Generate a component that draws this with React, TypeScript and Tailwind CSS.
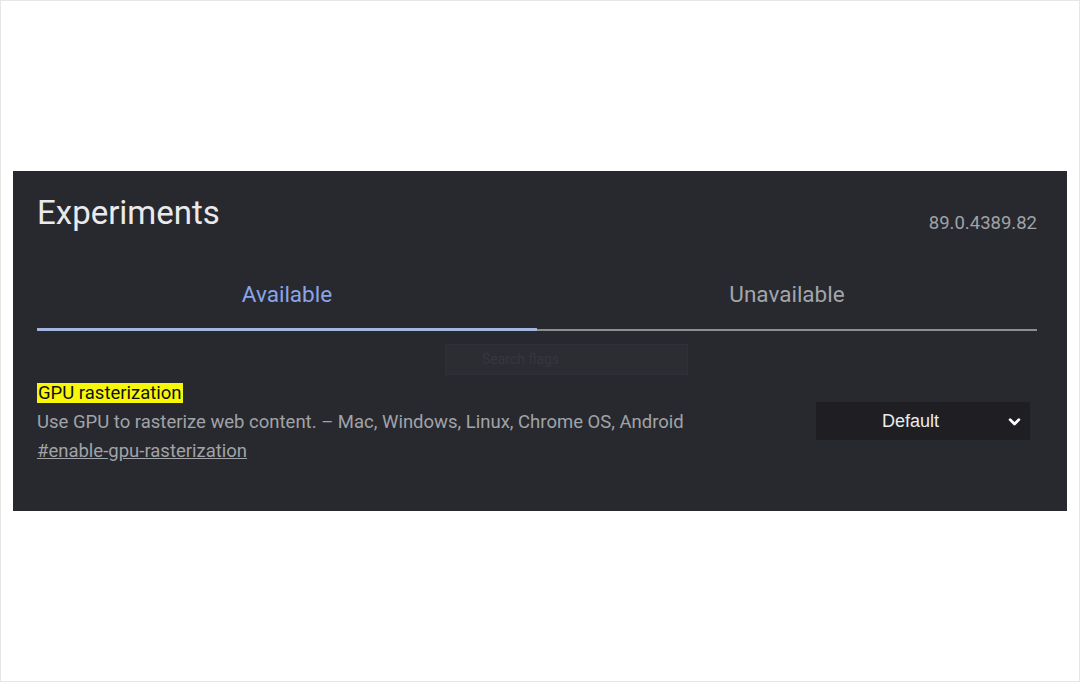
import React from 'react'

const Chevron = () => (
	<svg width="15" height="15" viewBox="0 0 24 24" fill="none" stroke="currentColor" strokeWidth="4.5" strokeLinecap="round" strokeLinejoin="round">
		<polyline points="5 9 12 16 19 9" />
	</svg>
)

const App: React.FC = () => {
	return (
		<div
			className="w-[1080px] h-[682px] bg-white border border-[#e6e6e6] pt-[170px] pl-[12px]"
			style={{ fontFamily: 'Roboto, "Liberation Sans", sans-serif' }}
		>
			<div className="w-[1054px] h-[340px] bg-[#28292e] pl-[24px] pr-[30px]">
				<div className="flex items-start justify-between pt-[22px]">
					<h1 className="text-[33px] leading-[40px] text-[#e8eaed]">Experiments</h1>
					<span className="mt-[17px] text-[18.5px] text-[#a0a3a8]">89.0.4389.82</span>
				</div>
				<div className="flex mt-[43px]">
					<div className="flex-1 flex flex-col items-center">
						<span className="text-[22.5px] leading-[26px] text-[#89a5e8] h-[47px]">Available</span>
						<div className="w-full h-[3px] bg-[#a3b6df]" />
					</div>
					<div className="flex-1 flex flex-col items-center">
						<span className="text-[22.5px] leading-[26px] text-[#a3a5aa] h-[48px]">Unavailable</span>
						<div className="w-full h-[2px] bg-[#8d8e92]" />
					</div>
				</div>
				<div className="flex mt-[13px] pl-[408px]">
					<div className="w-[243px] h-[31px] bg-[#2c2d33] border border-[#303138] flex items-center pl-[36px] text-[14px] text-[#36373e]">
						Search flags
					</div>
				</div>
				<div className="flex items-center justify-between mt-[8px] pr-[7px]">
					<div className="flex flex-col">
						<span className="self-start bg-[#f7f70a] text-[#111] text-[18.5px] leading-[20px] px-[1px]">GPU rasterization</span>
						<p className="text-[18.5px] leading-[29px] mt-[5px] text-[#a1a3a8]">
							Use GPU to rasterize web content. – Mac, Windows, Linux, Chrome OS, Android
						</p>
						<a className="text-[18.5px] leading-[29px] text-[#a1a3a8] underline self-start">#enable-gpu-rasterization</a>
					</div>
					<div className="w-[214px] h-[38px] mb-[6px] bg-[#1f1f23] flex items-center justify-between pl-[66px] pr-[8px] text-white">
						<span className="text-[18px] font-medium text-[#ebebeb]" style={{ fontFamily: '"Liberation Sans", Arial, sans-serif' }}>Default</span>
						<Chevron />
					</div>
				</div>
			</div>
		</div>
	)
}

export default App
